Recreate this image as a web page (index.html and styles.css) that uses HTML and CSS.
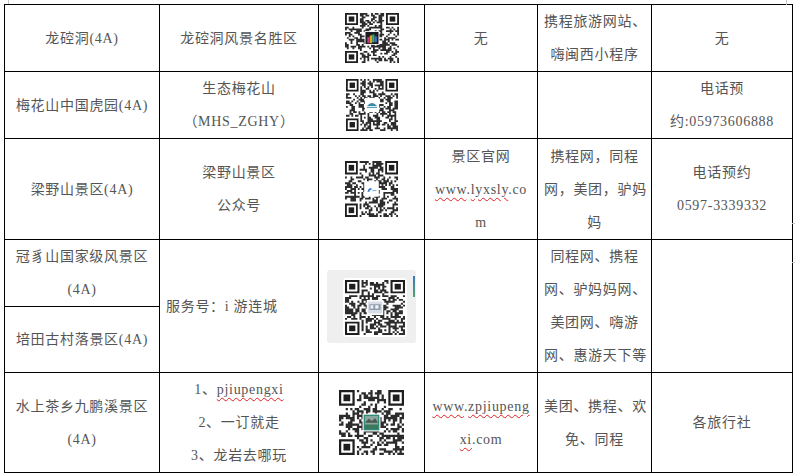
FILE: index.html
```html
<!DOCTYPE html>
<html lang="zh-CN">
<head>
<meta charset="utf-8">
<title>景区预订渠道</title>
<link rel="stylesheet" href="styles.css">
</head>
<body>
<div class="page">
  <span class="mark mark-tl"></span>
  <span class="mark mark-tr"></span>
  <span class="mark mark-r1"></span>
  <span class="mark mark-r2"></span>
  <table class="sheet">
    <colgroup>
      <col class="c1"><col class="c2"><col class="c3"><col class="c4"><col class="c5"><col class="c6">
    </colgroup>
    <tbody>
      <tr class="r1">
        <td>龙硿洞(4A)</td>
        <td>龙硿洞风景名胜区</td>
        <td class="qrcell"><span class="qr" data-seed="11" data-w="54" data-h="50" data-logo="dark"></span></td>
        <td>无</td>
        <td>携程旅游网站、<br>嗨闽西小程序</td>
        <td>无</td>
      </tr>
      <tr class="r2">
        <td>梅花山中国虎园(4A)</td>
        <td>生态梅花山<br>（MHS_ZGHY）</td>
        <td class="qrcell"><span class="qr" data-seed="27" data-w="52" data-h="52" data-logo="dome"></span></td>
        <td></td>
        <td></td>
        <td>电话预<br>约:05973606888</td>
      </tr>
      <tr class="r3">
        <td>梁野山景区(4A)</td>
        <td>梁野山景区<br>公众号</td>
        <td class="qrcell"><span class="qr" data-seed="43" data-w="53" data-h="56" data-logo="bird"></span></td>
        <td>景区官网<br><span class="sp">www</span>.<span class="sp">lyxsly</span>.co<br>m</td>
        <td>携程网，同程<br>网，美团，驴妈<br>妈</td>
        <td>电话预约<br>0597-3339332</td>
      </tr>
      <tr class="r4a">
        <td>冠豸山国家级风景区<br>(4A)</td>
        <td rowspan="2" class="left">服务号：i 游连城</td>
        <td rowspan="2" class="qrcell">
          <span class="panel"><span class="panel-inner"><span class="qr" data-seed="59" data-w="60" data-h="55" data-logo="photo"></span></span><span class="accent"></span></span>
        </td>
        <td rowspan="2"></td>
        <td rowspan="2">同程网、携程<br>网、驴妈妈网、<br>美团网、嗨游<br>网、惠游天下等</td>
        <td rowspan="2"></td>
      </tr>
      <tr class="r4b">
        <td>培田古村落景区(4A)</td>
      </tr>
      <tr class="r5">
        <td>水上茶乡九鹏溪景区<br>(4A)</td>
        <td>1、<span class="sp">pjiupengxi</span><br>2、一订就走<br>3、龙岩去哪玩</td>
        <td class="qrcell"><span class="qr" data-seed="83" data-w="65" data-h="65" data-logo="green"></span></td>
        <td><span class="sp">www</span>.<span class="sp">zpjiupeng</span><br><span class="sp">xi</span>.com</td>
        <td>美团、携程、欢<br>免、同程</td>
        <td>各旅行社</td>
      </tr>
    </tbody>
  </table>
</div>
<script src="qr.js"></script>
</body>
</html>
```

FILE: styles.css
```css
html, body {
  margin: 0;
  padding: 0;
  background: #ffffff;
}

body {
  font-family: "Liberation Serif", "Noto Sans CJK SC", serif;
  font-size: 14px;
  color: #555555;
}

.page {
  position: relative;
  width: 795px;
  height: 475px;
  padding: 4px 0 0 4px;
  box-sizing: border-box;
  overflow: hidden;
}

.mark {
  position: absolute;
  background: #c8c8c8;
}
.mark-tl { left: 8px; top: 0; width: 1px; height: 4px; }
.mark-tr { left: 786px; top: 0; width: 1px; height: 5px; }
.mark-r1 { left: 792px; top: 223px; width: 3px; height: 1px; }
.mark-r2 { left: 792px; top: 262px; width: 3px; height: 1px; }

.sheet {
  border-collapse: collapse;
  table-layout: fixed;
  width: 788px;
}

.c1 { width: 155px; }
.c2 { width: 159px; }
.c3 { width: 106px; }
.c4 { width: 113px; }
.c5 { width: 114px; }
.c6 { width: 141px; }

.sheet td {
  border: 1px solid #000000;
  padding: 0 6px;
  text-align: center;
  vertical-align: middle;
  line-height: 33px;
  white-space: nowrap;
  letter-spacing: 0.7px;
  overflow: visible;
}

.sheet td.left {
  text-align: left;
}

.sheet td.qrcell {
  padding: 0;
  line-height: 0;
}

.r1 { height: 67px; }
.r2 { height: 67px; }
.r3 { height: 101px; }
.r4a { height: 67px; }
.r4b { height: 66px; }
.r5 { height: 100px; }

.sp {
  text-decoration: underline wavy #e02020;
  text-decoration-thickness: 1px;
  text-underline-offset: 3px;
}

.qr {
  display: inline-block;
  vertical-align: middle;
}
.qr svg {
  display: block;
}

.panel {
  position: relative;
  display: inline-block;
  vertical-align: middle;
  background: #efefef;
  border-radius: 3px;
  padding: 8px 9px 6px 16px;
}

.panel-inner {
  display: block;
  background: #ffffff;
  border-radius: 4px;
  padding: 2px;
}

.accent {
  position: absolute;
  right: 1px;
  top: 6px;
  width: 2px;
  height: 21px;
  background: linear-gradient(#3b78c0, #5aa070);
}
```

FILE: qr.js
```js
(function () {
  function rng(seed) {
    var s = seed >>> 0;
    return function () {
      s = (Math.imul(s, 1664525) + 1013904223) >>> 0;
      return s / 4294967296;
    };
  }
  var NS = 'http://www.w3.org/2000/svg';
  var n = 29;
  var c = n / 2;
  function logoFor(kind) {
    var a = c - 3.5, b = c + 3.5;
    switch (kind) {
      case 'dark':
        return '<rect x="' + a + '" y="' + a + '" width="7" height="7" fill="#1a1a22"/>' +
          '<rect x="' + (a + 1) + '" y="' + (a + 3) + '" width="1.2" height="3.5" fill="#c03a8a"/>' +
          '<rect x="' + (a + 2.3) + '" y="' + (a + 2) + '" width="1.2" height="4.5" fill="#e0a020"/>' +
          '<rect x="' + (a + 3.6) + '" y="' + (a + 1.5) + '" width="1.2" height="4.5" fill="#40b060"/>' +
          '<rect x="' + (a + 4.9) + '" y="' + (a + 2.5) + '" width="1.2" height="3.5" fill="#3a70d0"/>';
      case 'dome':
        return '<circle cx="' + c + '" cy="' + c + '" r="4" fill="#ffffff"/>' +
          '<path d="M' + (c - 2.8) + ' ' + (c + 0.6) + ' Q' + c + ' ' + (c - 2.8) + ' ' + (c + 2.8) + ' ' + (c + 0.6) + ' Z" fill="#3a8aa8"/>' +
          '<rect x="' + (c - 2.8) + '" y="' + (c + 1) + '" width="5.6" height="0.7" fill="#5aa0b8"/>';
      case 'bird':
        return '<rect x="' + (a + 0.3) + '" y="' + (a + 0.3) + '" width="6.4" height="6.4" fill="#ffffff"/>' +
          '<path d="M' + (a + 1.2) + ' ' + (a + 4.8) + ' Q' + (a + 2.4) + ' ' + (a + 1.8) + ' ' + (a + 3.8) + ' ' + (a + 3.6) + ' Q' + (a + 2.6) + ' ' + (a + 3.6) + ' ' + (a + 2.2) + ' ' + (a + 5) + ' Z" fill="#2f7cc4"/>' +
          '<rect x="' + (a + 4) + '" y="' + (a + 4) + '" width="2.2" height="0.6" fill="#8ab0d8"/>';
      case 'photo':
        return '<rect x="' + a + '" y="' + (a + 0.4) + '" width="7" height="6.2" rx="0.7" fill="#d9dee6"/>' +
          '<rect x="' + (a + 0.8) + '" y="' + (a + 1.8) + '" width="5.4" height="3" fill="#8a9aa8"/>' +
          '<rect x="' + (a + 1.3) + '" y="' + (a + 2.3) + '" width="1.4" height="1.8" fill="#eef0f3"/>' +
          '<rect x="' + (a + 3.6) + '" y="' + (a + 2.3) + '" width="1.6" height="1.8" fill="#eef0f3"/>';
      case 'green':
        return '<rect x="' + a + '" y="' + a + '" width="7" height="7" fill="#2f8a7a"/>' +
          '<rect x="' + (a + 0.6) + '" y="' + (a + 0.6) + '" width="5.8" height="5.8" fill="#8aa6a0"/>' +
          '<path d="M' + (a + 0.6) + ' ' + (a + 3.6) + ' L' + (a + 2.2) + ' ' + (a + 1.8) + ' L' + (a + 3.6) + ' ' + (a + 2.8) + ' L' + (a + 5.2) + ' ' + (a + 1.6) + ' L' + (a + 6.4) + ' ' + (a + 3.6) + ' Z" fill="#4a5a50"/>' +
          '<rect x="' + (a + 0.6) + '" y="' + (a + 4.4) + '" width="5.8" height="2" fill="#3a7a5a"/>';
    }
    return '';
  }
  var els = document.querySelectorAll('.qr');
  for (var i = 0; i < els.length; i++) {
    var el = els[i];
    var r = rng(+el.dataset.seed);
    var w = +el.dataset.w, h = +el.dataset.h;
    var d = '';
    for (var y = 0; y < n; y++) {
      for (var x = 0; x < n; x++) {
        var inFinder = (x < 8 && y < 8) || (x >= n - 8 && y < 8) || (x < 8 && y >= n - 8);
        if (inFinder) continue;
        if (r() < 0.52) d += 'M' + x + ' ' + y + 'h1v1h-1z';
      }
    }
    var finders = '';
    var pos = [[0, 0], [n - 7, 0], [0, n - 7]];
    for (var k = 0; k < pos.length; k++) {
      var fx = pos[k][0], fy = pos[k][1];
      finders += '<path fill-rule="evenodd" d="M' + fx + ' ' + fy + 'h7v7h-7z M' + (fx + 1) + ' ' + (fy + 1) + 'v5h5v-5z" fill="#1e1e1e"/>';
      finders += '<rect x="' + (fx + 2) + '" y="' + (fy + 2) + '" width="3" height="3" fill="#1e1e1e"/>';
    }
    var svg = '<svg xmlns="' + NS + '" width="' + w + '" height="' + h + '" viewBox="0 0 ' + n + ' ' + n + '" preserveAspectRatio="none">' +
      '<rect width="' + n + '" height="' + n + '" fill="#ffffff"/>' +
      '<path d="' + d + '" fill="#2c2c2c"/>' + finders +
      '<rect x="' + (c - 4) + '" y="' + (c - 4) + '" width="8" height="8" fill="#ffffff"/>' +
      logoFor(el.dataset.logo) + '</svg>';
    el.innerHTML = svg;
  }
})();
```
